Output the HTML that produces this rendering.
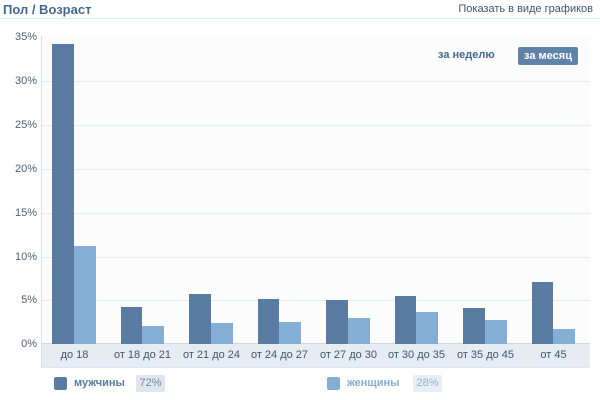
<!DOCTYPE html>
<html><head><meta charset="utf-8"><style>
*{margin:0;padding:0;box-sizing:border-box}
body{width:600px;height:400px;background:#fff;position:relative;overflow:hidden;font-family:"Liberation Sans","DejaVu Sans",sans-serif}
.a{position:absolute}
.yl{position:absolute;right:563px;font-size:11px;color:#4b5f78;width:40px;text-align:right;line-height:12px}
.g{position:absolute;left:42px;width:548px;height:1px;background:#e6ebf1}
.d{position:absolute;background:#5a7ca2}
.l{position:absolute;background:#84aed3}
.xl{position:absolute;top:349px;font-size:11px;color:#3d5674;width:69px;text-align:center;white-space:nowrap}
</style></head><body>
<div class="a" style="left:3px;top:2px;font-size:13px;font-weight:bold;color:#45688e">Пол / Возраст</div>
<div class="a" style="right:7px;top:3px;font-size:11px;color:#3e5570">Показать в виде графиков</div>
<div class="a" style="left:0;top:18px;width:600px;height:1px;background:#e4e9ef"></div>

<div class="a" style="left:41px;top:36px;width:549px;height:308px;background:#fcfcfd"></div>
<div class="a" style="left:41px;top:344px;width:549px;height:24px;background:#e7ecf2;border-bottom:1px solid #dfe5ec"></div>
<div class="a" style="left:41px;top:36px;width:1px;height:332px;background:#d6dde6"></div>
<div class="g" style="top:81px"></div><div class="g" style="top:125px"></div><div class="g" style="top:169px"></div>
<div class="g" style="top:213px"></div><div class="g" style="top:257px"></div><div class="g" style="top:300px"></div>
<div class="a" style="left:42px;top:343px;width:548px;height:1px;background:#cfd8e2"></div>

<div class="yl" style="top:31px">35%</div><div class="yl" style="top:75px">30%</div><div class="yl" style="top:119px">25%</div>
<div class="yl" style="top:163px">20%</div><div class="yl" style="top:207px">15%</div><div class="yl" style="top:251px">10%</div>
<div class="yl" style="top:294px">5%</div><div class="yl" style="top:338px">0%</div>

<div class="a" style="left:438px;top:49px;font-size:11px;font-weight:bold;color:#45688e">за неделю</div>
<div class="a" style="left:518px;top:47px;width:60px;height:18px;background:#5f82a8;border-radius:2px;color:#fff;font-size:11px;font-weight:bold;text-align:center;line-height:18px">за месяц</div>

<div class="d" style="left:52px;top:44px;width:22px;height:300px"></div><div class="l" style="left:74px;top:246px;width:22px;height:98px"></div>
<div class="d" style="left:121px;top:307px;width:21px;height:37px"></div><div class="l" style="left:142px;top:326px;width:22px;height:18px"></div>
<div class="d" style="left:189px;top:294px;width:22px;height:50px"></div><div class="l" style="left:211px;top:323px;width:22px;height:21px"></div>
<div class="d" style="left:258px;top:299px;width:21px;height:45px"></div><div class="l" style="left:279px;top:322px;width:22px;height:22px"></div>
<div class="d" style="left:326px;top:300px;width:22px;height:44px"></div><div class="l" style="left:348px;top:318px;width:22px;height:26px"></div>
<div class="d" style="left:395px;top:296px;width:21px;height:48px"></div><div class="l" style="left:416px;top:312px;width:22px;height:32px"></div>
<div class="d" style="left:463px;top:308px;width:22px;height:36px"></div><div class="l" style="left:485px;top:320px;width:22px;height:24px"></div>
<div class="d" style="left:532px;top:282px;width:21px;height:62px"></div><div class="l" style="left:553px;top:329px;width:22px;height:15px"></div>

<div class="xl" style="left:40px">до 18</div><div class="xl" style="left:108px">от 18 до 21</div>
<div class="xl" style="left:177px">от 21 до 24</div><div class="xl" style="left:245px">от 24 до 27</div>
<div class="xl" style="left:314px">от 27 до 30</div><div class="xl" style="left:382px">от 30 до 35</div>
<div class="xl" style="left:451px">от 35 до 45</div><div class="xl" style="left:519px">от 45</div>

<div class="a" style="left:54px;top:377px;width:13px;height:13px;background:#5a7ca2;border-radius:2px"></div>
<div class="a" style="left:74px;top:377px;font-size:11px;font-weight:bold;color:#5a7ca2">мужчины</div>
<div class="a" style="left:136px;top:375px;width:29px;height:17px;background:#dfe6ee;border-radius:2px;font-size:11px;color:#6d8aa8;text-align:center;line-height:17px">72%</div>
<div class="a" style="left:327px;top:377px;width:13px;height:13px;background:#84aed3;border-radius:2px"></div>
<div class="a" style="left:347px;top:377px;font-size:11px;font-weight:bold;color:#84aed3">женщины</div>
<div class="a" style="left:413px;top:375px;width:29px;height:17px;background:#e8eef5;border-radius:2px;font-size:11px;color:#92b2d2;text-align:center;line-height:17px">28%</div>
</body></html>
